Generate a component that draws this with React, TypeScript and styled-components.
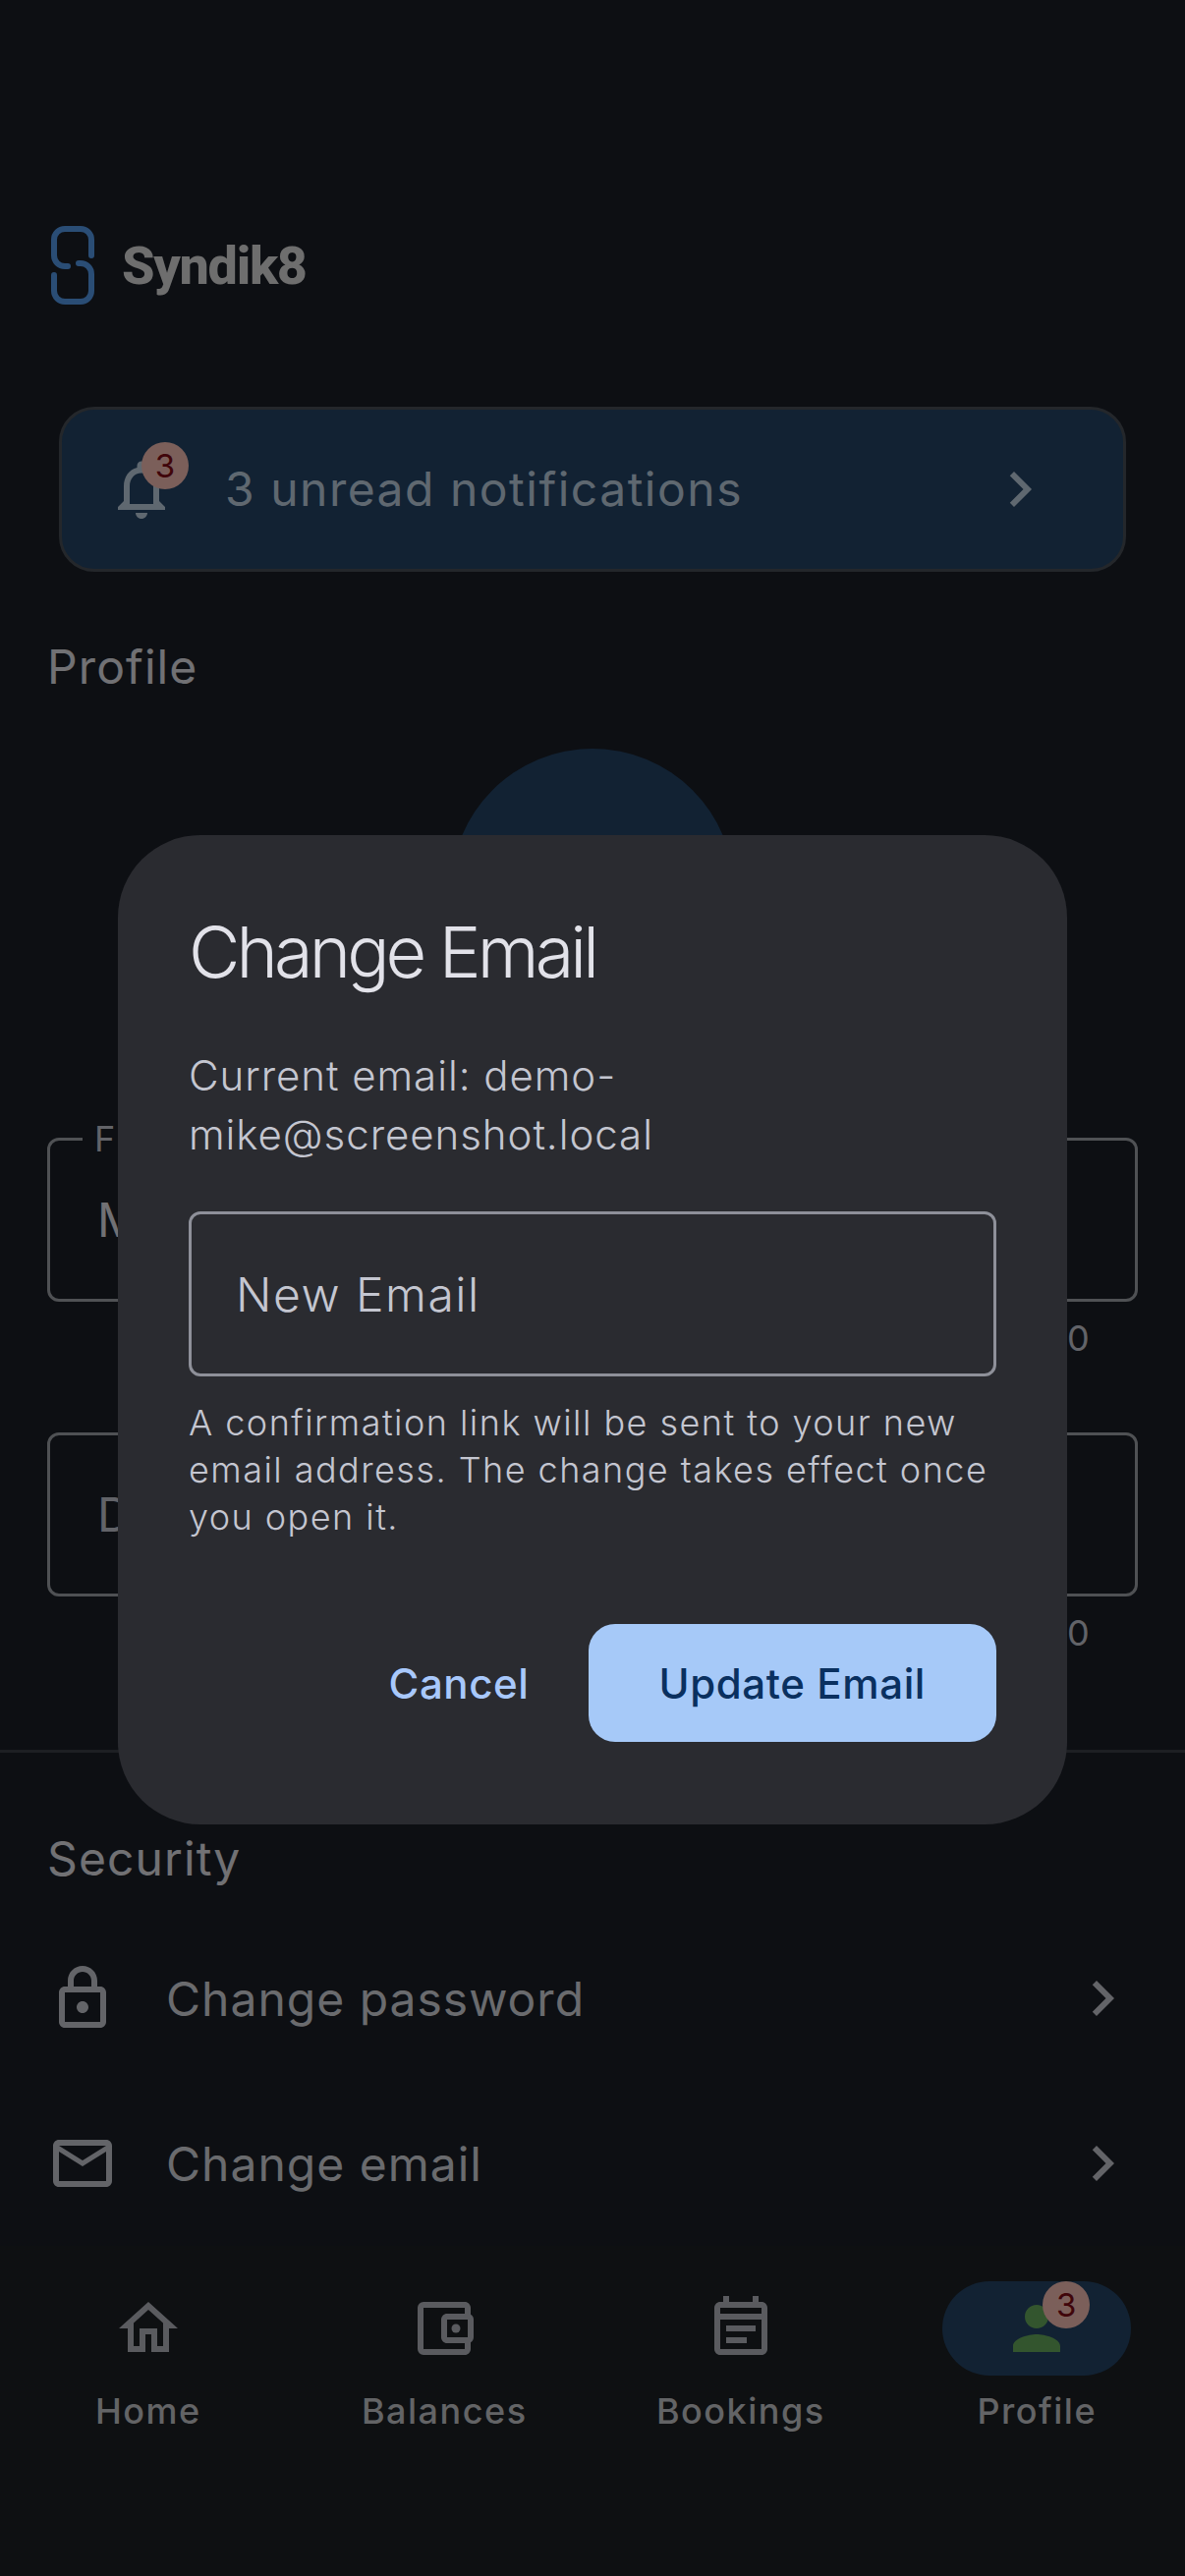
import React from "react";
import styled, { createGlobalStyle } from "styled-components";
import {
  MdChevronRight,
  MdOutlineAccountBalanceWallet,
  MdOutlineEmail,
  MdOutlineEventNote,
  MdOutlineHome,
  MdOutlineLock,
  MdOutlineNotifications,
  MdPerson,
} from "react-icons/md";

const GlobalStyle = createGlobalStyle`
  * { box-sizing: border-box; }
  html, body { margin: 0; padding: 0; background: #1a1e26; }
  body { font-family: Inter, "Liberation Sans", sans-serif; }
`;

const Page = styled.div`
  position: relative;
  width: 1206px;
  height: 2622px;
  overflow: hidden;
  display: flex;
  flex-direction: column;
  background: #1a1e26;
  color: #e2e2e9;
`;

const Main = styled.main`
  flex: 1;
  min-height: 0;
  padding-top: 230px;
  display: flex;
  flex-direction: column;
`;

const Brand = styled.header`
  display: flex;
  align-items: center;
  gap: 28px;
  padding-left: 52px;
  height: 80px;
`;

const BrandName = styled.span`
  font-family: Roboto, sans-serif;
  font-size: 54px;
  font-weight: 800;
  letter-spacing: -1.3px;
  color: #dcdcdc;
`;

const NoticeCard = styled.div`
  margin: 104px 60px 0;
  height: 168px;
  display: flex;
  align-items: center;
  padding: 0 69px 0 45px;
  gap: 49px;
  background: #244466;
  border: 3px solid #484e56;
  border-radius: 36px;
  color: #bfd0e0;
`;

const NoticeText = styled.span`
  flex: 1;
  font-size: 48px;
  letter-spacing: 1.5px;
  line-height: 72px;
`;

const IconSlot = styled.span`
  position: relative;
  display: flex;
  width: 72px;
  height: 72px;
  font-size: 72px;
  flex-shrink: 0;
`;

const Badge = styled.span<{ $left: number }>`
  position: absolute;
  left: ${(p) => p.$left}px;
  top: -12px;
  width: 48px;
  height: 48px;
  border-radius: 50%;
  background: #f6beb4;
  color: #800a14;
  font-size: 33px;
  line-height: 48px;
  text-align: center;
`;

const SectionTitle = styled.h2<{ $top: number }>`
  margin: ${(p) => p.$top}px 0 0;
  padding-left: 48px;
  font-size: 48px;
  font-weight: 400;
  line-height: 72px;
  letter-spacing: 1.1px;
  color: #e2e2e9;
`;

const Avatar = styled.div`
  align-self: center;
  width: 288px;
  height: 288px;
  margin-top: 47px;
  border-radius: 50%;
  background: #244466;
`;

const Field = styled.div<{ $top: number; $filled?: boolean }>`
  position: relative;
  margin: ${(p) => p.$top}px 48px 0;
  height: 167px;
  display: flex;
  align-items: center;
  padding-left: 48px;
  border: 3px solid #9ea2a8;
  border-radius: 12px;
  font-size: 48px;
  letter-spacing: 1.5px;
  color: ${(p) => (p.$filled ? "#e2e2e9" : "#c4c6d0")};
`;

const FloatingLabel = styled.span`
  position: absolute;
  left: 33px;
  top: -22px;
  padding: 0 12px;
  background: #1a1e26;
  font-size: 36px;
  line-height: 40px;
  letter-spacing: 1.2px;
  color: #c4c6d0;
`;

const Counter = styled.div`
  padding: 13px 96px 0 0;
  text-align: right;
  font-size: 36px;
  line-height: 48px;
  letter-spacing: 1.2px;
  color: #c4c6d0;
`;

const Divider = styled.hr`
  margin: 95px 0 0;
  border: 0;
  border-top: 3px solid #3a3e46;
`;

const SettingList = styled.div`
  margin-top: 22px;
`;

const SettingRow = styled.div`
  height: 168px;
  display: flex;
  align-items: center;
  padding: 0 48px;
  gap: 49px;
  color: #c6c8d0;
`;

const SettingText = styled.span`
  flex: 1;
  font-size: 48px;
  letter-spacing: 1px;
  color: #d4d6dc;
`;

const BottomNav = styled.nav`
  height: 336px;
  flex-shrink: 0;
  display: grid;
  grid-template-columns: repeat(4, 1fr);
  padding-top: 36px;
  background: #1c2024;
`;

const NavItem = styled.div`
  display: flex;
  flex-direction: column;
  align-items: center;
`;

const NavPill = styled.span<{ $active?: boolean }>`
  width: 192px;
  height: 96px;
  display: flex;
  align-items: center;
  justify-content: center;
  border-radius: 48px;
  background: ${(p) => (p.$active ? "#244466" : "transparent")};
  color: ${(p) => (p.$active ? "#66aa5c" : "#b4b6be")};
`;

const NavLabel = styled.span`
  margin-top: 12px;
  font-size: 36px;
  font-weight: 500;
  line-height: 48px;
  letter-spacing: 1.5px;
  color: #c6c8cc;
`;

const Scrim = styled.div`
  position: absolute;
  inset: 0;
  display: flex;
  justify-content: center;
  align-items: flex-start;
  padding-top: 850px;
  background: rgba(0, 0, 0, 0.5);
`;

const Dialog = styled.div`
  width: 966px;
  height: 1007px;
  padding: 71px 72px 84px;
  display: flex;
  flex-direction: column;
  border-radius: 84px;
  background: #2a2b30;
`;

const DialogTitle = styled.h1`
  margin: 0;
  font-size: 72px;
  font-weight: 300;
  line-height: 96px;
  letter-spacing: -3.9px;
  color: #e2e2e9;
`;

const CurrentEmail = styled.p`
  margin: 48px 0 0;
  font-size: 42px;
  font-weight: 300;
  line-height: 60px;
  letter-spacing: 0.95px;
  color: #c4c6d0;
`;

const EmailInput = styled.div`
  margin-top: 48px;
  height: 168px;
  display: flex;
  align-items: center;
  padding-left: 45px;
  border: 3px solid #8e9099;
  border-radius: 12px;
  font-size: 48px;
  font-weight: 300;
  letter-spacing: 1.5px;
  color: #c4c6d0;
`;

const HelpText = styled.p`
  margin: 23px 0 0;
  font-size: 36px;
  font-weight: 300;
  line-height: 48px;
  letter-spacing: 1.46px;
  color: #c4c6d0;
`;

const Actions = styled.div`
  margin-top: auto;
  display: flex;
  justify-content: flex-end;
  align-items: center;
  gap: 24px;
`;

const TextButton = styled.button`
  height: 120px;
  padding: 0 36px;
  border: 0;
  background: none;
  font: 500 42px Inter, sans-serif;
  letter-spacing: 0.6px;
  color: #a8c8fb;
`;

const FilledButton = styled.button`
  height: 120px;
  padding: 0 72px;
  border: 0;
  border-radius: 27px;
  background: #a6c9f8;
  font: 500 42px Inter, sans-serif;
  letter-spacing: 0.6px;
  color: #0a305f;
`;

const LogoMark = () => (
  <svg width="44" height="80" viewBox="0 0 44 80" fill="none" stroke="#549aea" strokeWidth="6" strokeLinecap="round">
    <path d="M41 30V14a11 11 0 0 0-11-11H14A11 11 0 0 0 3 14V30a11 11 0 0 0 11 11h3" />
    <path d="M3 50V66a11 11 0 0 0 11 11H30a11 11 0 0 0 11-11V49a11 11 0 0 0-11-11h-2" />
  </svg>
);

const navItems = [
  { label: "Home", icon: <MdOutlineHome /> },
  { label: "Balances", icon: <MdOutlineAccountBalanceWallet /> },
  { label: "Bookings", icon: <MdOutlineEventNote /> },
];

const App = () => {
  return (
    <Page>
      <GlobalStyle />
      <Main>
        <Brand>
          <LogoMark />
          <BrandName>Syndik8</BrandName>
        </Brand>
        <NoticeCard>
          <IconSlot>
            <MdOutlineNotifications />
            <Badge $left={36}>3</Badge>
          </IconSlot>
          <NoticeText>3 unread notifications</NoticeText>
          <IconSlot>
            <MdChevronRight />
          </IconSlot>
        </NoticeCard>
        <SectionTitle $top={61}>Profile</SectionTitle>
        <Avatar />
        <Field $top={108} $filled>
          <FloatingLabel>First Name</FloatingLabel>
          Mike
        </Field>
        <Counter>4/50</Counter>
        <Field $top={72}>Display Name</Field>
        <Counter>0/50</Counter>
        <Divider />
        <SectionTitle $top={72}>Security</SectionTitle>
        <SettingList>
          <SettingRow>
            <IconSlot>
              <MdOutlineLock />
            </IconSlot>
            <SettingText>Change password</SettingText>
            <IconSlot>
              <MdChevronRight />
            </IconSlot>
          </SettingRow>
          <SettingRow>
            <IconSlot>
              <MdOutlineEmail />
            </IconSlot>
            <SettingText>Change email</SettingText>
            <IconSlot>
              <MdChevronRight />
            </IconSlot>
          </SettingRow>
        </SettingList>
      </Main>
      <BottomNav>
        {navItems.map((item) => (
          <NavItem key={item.label}>
            <NavPill>
              <IconSlot>{item.icon}</IconSlot>
            </NavPill>
            <NavLabel>{item.label}</NavLabel>
          </NavItem>
        ))}
        <NavItem>
          <NavPill $active>
            <IconSlot>
              <MdPerson />
              <Badge $left={42}>3</Badge>
            </IconSlot>
          </NavPill>
          <NavLabel>Profile</NavLabel>
        </NavItem>
      </BottomNav>
      <Scrim>
        <Dialog>
          <DialogTitle>Change Email</DialogTitle>
          <CurrentEmail>Current email: demo-mike@screenshot.local</CurrentEmail>
          <EmailInput>New Email</EmailInput>
          <HelpText>
            A confirmation link will be sent to your new email address. The change takes effect once you open it.
          </HelpText>
          <Actions>
            <TextButton>Cancel</TextButton>
            <FilledButton>Update Email</FilledButton>
          </Actions>
        </Dialog>
      </Scrim>
    </Page>
  );
};

export default App;
